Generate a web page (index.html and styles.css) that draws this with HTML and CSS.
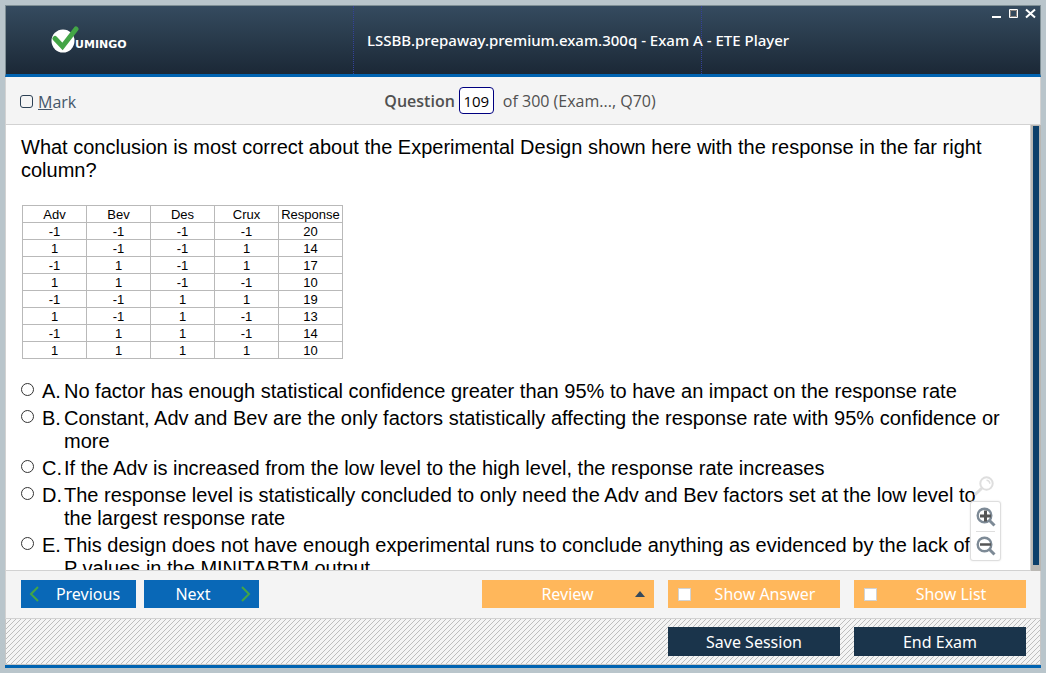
FILE: index.html
```
<!DOCTYPE html>
<html lang="en">
<head>
<meta charset="utf-8">
<title>LSSBB.prepaway.premium.exam.300q - Exam A - ETE Player</title>
<link rel="stylesheet" href="styles.css">
</head>
<body>
<div class="window">
  <header class="titlebar">
    <div class="brand">
      <svg class="brand-mark" width="28" height="28" viewBox="0 0 28 28" aria-hidden="true">
        <circle cx="12" cy="15" r="11.500" fill="#fff"/>
        <path d="M4 12.500 L11.500 20.500 L25 3" fill="none" stroke="#43a546" stroke-width="5" stroke-linecap="round" stroke-linejoin="miter"/>
      </svg>
      <span class="brand-name">UMINGO</span>
    </div>
    <h1 class="title">LSSBB.prepaway.premium.exam.300q - Exam A - ETE Player</h1>
    <div class="window-controls">
      <button class="control" aria-label="Minimize"><svg width="11" height="11" viewBox="0 0 11 11"><path d="M1 9h9" stroke="#fff" stroke-width="2"/></svg></button>
      <button class="control" aria-label="Maximize"><svg width="11" height="11" viewBox="0 0 11 11"><path d="M1.500 1.500h8v8h-8z" fill="#34495c" stroke="#fff"/><path d="M2.500 2.500h6v6h-6z" fill="none" stroke="#8d8580"/></svg></button>
      <button class="control" aria-label="Close"><svg width="11" height="11" viewBox="0 0 11 11"><path d="M1 1.500l9 8M10 1.500l-9 8" stroke="#fff" stroke-width="2"/></svg></button>
    </div>
  </header>

  <div class="question-bar">
    <label class="mark"><input type="checkbox" class="mark-box"><span><u>M</u>ark</span></label>
    <div class="position">
      <label class="position-label" for="question-number">Question</label>
      <input class="position-input" id="question-number" type="text" value="109">
      <span>of 300 (Exam..., Q70)</span>
    </div>
  </div>

  <main class="stage">
    <div class="content">
      <p class="question">What conclusion is most correct about the Experimental Design shown here with the response in the far right column?</p>
      <table class="design">
        <thead><tr><th>Adv</th><th>Bev</th><th>Des</th><th>Crux</th><th>Response</th></tr></thead>
        <tbody>
          <tr><td>-1</td><td>-1</td><td>-1</td><td>-1</td><td>20</td></tr>
          <tr><td>1</td><td>-1</td><td>-1</td><td>1</td><td>14</td></tr>
          <tr><td>-1</td><td>1</td><td>-1</td><td>1</td><td>17</td></tr>
          <tr><td>1</td><td>1</td><td>-1</td><td>-1</td><td>10</td></tr>
          <tr><td>-1</td><td>-1</td><td>1</td><td>1</td><td>19</td></tr>
          <tr><td>1</td><td>-1</td><td>1</td><td>-1</td><td>13</td></tr>
          <tr><td>-1</td><td>1</td><td>1</td><td>-1</td><td>14</td></tr>
          <tr><td>1</td><td>1</td><td>1</td><td>1</td><td>10</td></tr>
        </tbody>
      </table>
      <div class="answers">
        <label class="answer"><input type="radio" name="answer"><span>A.</span><span>No factor has enough statistical confidence greater than 95% to have an impact on the response rate</span></label>
        <label class="answer"><input type="radio" name="answer"><span>B.</span><span>Constant, Adv and Bev are the only factors statistically affecting the response rate with 95% confidence or more</span></label>
        <label class="answer"><input type="radio" name="answer"><span>C.</span><span>If the Adv is increased from the low level to the high level, the response rate increases</span></label>
        <label class="answer"><input type="radio" name="answer"><span>D.</span><span>The response level is statistically concluded to only need the Adv and Bev factors set at the low level to the largest response rate</span></label>
        <label class="answer beside-zoom"><input type="radio" name="answer"><span>E.</span><span>This design does not have enough experimental runs to conclude anything as evidenced by the lack of P values in the MINITABTM output</span></label>
      </div>
    </div>
    <div class="zoom">
      <svg class="zoom-reset" width="20" height="20" viewBox="0 0 20 20" aria-hidden="true">
        <circle cx="12.500" cy="7.500" r="6.200" fill="none" stroke="#dedede" stroke-width="2"/>
        <path d="M12.500 4.200a3.400 3.400 0 0 1 3.300 3.500" fill="none" stroke="#dedede" stroke-width="1.500"/>
        <path d="M7.500 12.500L1.800 18" stroke="#dedede" stroke-width="3" stroke-linecap="round"/>
      </svg>
      <div class="zoom-panel">
        <button class="zoom-button" aria-label="Zoom in"><svg width="20" height="20" viewBox="0 0 20 20"><circle cx="8.500" cy="8.500" r="6.800" fill="none" stroke="#7d8a96" stroke-width="2.400"/><path d="M13.500 13.500L18.500 18.500" stroke="#7d8a96" stroke-width="3"/><path d="M4 9h11M9.500 3.500v11" stroke="#555" stroke-width="3"/></svg></button>
        <button class="zoom-button" aria-label="Zoom out"><svg width="20" height="20" viewBox="0 0 20 20"><circle cx="8.500" cy="8.500" r="6.800" fill="none" stroke="#7d8a96" stroke-width="2.400"/><path d="M13.500 13.500L18.500 18.500" stroke="#7d8a96" stroke-width="3"/><path d="M4 8.500h11" stroke="#555" stroke-width="2.500"/></svg></button>
      </div>
    </div>
    <div class="scroll-track"><div class="scroll-thumb"></div></div>
  </main>

  <div class="action-bar">
    <button class="button nav previous"><svg width="10" height="16" viewBox="0 0 10 16"><path d="M9 1L2 8l7 7" fill="none" stroke="#43a546" stroke-width="2"/></svg><span>Previous</span></button>
    <button class="button nav next"><span>Next</span><svg width="10" height="16" viewBox="0 0 10 16"><path d="M1 1l7 7-7 7" fill="none" stroke="#43a546" stroke-width="2"/></svg></button>
    <button class="button option review"><span>Review</span><svg width="10" height="6" viewBox="0 0 10 6"><path d="M0 6L5 0l5 6z" fill="#34495c"/></svg></button>
    <label class="button option toggle"><input type="checkbox"><span>Show Answer</span></label>
    <label class="button option toggle"><input type="checkbox"><span>Show List</span></label>
  </div>

  <footer class="session-bar">
    <button class="button session">Save Session</button>
    <button class="button session">End Exam</button>
  </footer>
</div>
</body>
</html>
```
FILE: styles.css
```
* { box-sizing: border-box; }

body {
  margin: 0;
  height: 100vh;
  padding: 5px;
  background: #b9c5cb;
  font-family: "Open Sans", "Noto Sans", sans-serif;
  font-size: 16px;
}

button, input { font: inherit; margin: 0; }
button { border: 0; padding: 0; background: none; }
svg { display: block; }

.window {
  display: flex;
  flex-direction: column;
  height: 100%;
  border-bottom: 3px solid #0063b1;
  background: #f4f4f4;
}

/* Title bar */
.titlebar {
  display: grid;
  grid-template-columns: 347px 349px 1fr;
  height: 72px;
  border: 1px solid #7f8f95;
  border-bottom: 3px solid #0063b1;
  background: linear-gradient(#354b5f, #1b2836);
  color: #fff;
}

.brand { display: flex; align-items: center; padding-left: 45px; }
.brand-name {
  margin-left: -4px;
  padding-top: 9px;
  font: bold 11px/14px "DejaVu Sans", sans-serif;
}

.title {
  display: flex;
  align-items: center;
  margin: 0;
  padding-left: 13px;
  border: dotted #34419a;
  border-width: 0 1px;
  font-size: 15px;
  font-weight: 500;
  font-family: "Noto Sans", sans-serif;
  white-space: nowrap;
}

.window-controls {
  display: flex;
  justify-content: flex-end;
  gap: 6px;
  height: 11px;
  margin-top: 2px;
  padding-right: 4px;
}

/* Question position */
.question-bar {
  display: grid;
  grid-template-columns: 1fr auto 1fr;
  align-items: center;
  height: 48px;
  padding: 0 20px 0 14px;
  border: solid #d2d2d2;
  border-width: 0 1px 1px;
  color: #505050;
}

.mark { display: flex; align-items: center; gap: 5px; padding-top: 2px; color: #44566a; }
.mark-box {
  appearance: none;
  width: 13px;
  height: 13px;
  border: 1px solid #2c4054;
  border-radius: 3px;
}

.position { display: flex; align-items: center; }
.position-label { font-weight: 600; }
.position-input {
  width: 35px;
  height: 27px;
  margin: 0 9px 0 4px;
  padding: 0;
  border: 1px solid #000080;
  border-radius: 4px;
  background: #fff;
  color: #000;
  text-align: center;
  font-size: 15px;
}

/* Question and answers */
.stage {
  position: relative;
  display: flex;
  flex: 1;
  min-height: 0;
  border-left: 1px solid #d2d2d2;
  background: #fff;
}

.content {
  flex: 1;
  padding: 11px 30px 0 15px;
  border-bottom: 1px solid #d2d2d2;
  overflow: hidden;
  font: 20px/23px "Liberation Sans", Arial, sans-serif;
  color: #000;
}

.question { margin: 0 0 23px; }

.design {
  margin-left: 1px;
  border-collapse: collapse;
  table-layout: fixed;
  width: 321px;
  font-size: 13px;
  line-height: 15px;
  text-align: center;
}
.design th, .design td {
  height: 17px;
  padding: 1px 0 0;
  border: 1px solid #b9b9b9;
  font-weight: normal;
}

.answers { display: grid; gap: 4px; margin-top: 21px; }
.answer {
  display: grid;
  grid-template-columns: 21px 22px 1fr;
  align-items: start;
}
.beside-zoom { padding-right: 26px; }
.answer input {
  appearance: none;
  width: 13px;
  height: 13px;
  margin-top: 3px;
  border: 1px solid #333;
  border-radius: 50%;
}

.scroll-track {
  width: 11px;
  padding: 1px 2px 6px;
  background: #bab8b4;
  border-left: 1px solid #d2d2d2;
}
.scroll-thumb { height: 100%; background: #0d406b; }

.zoom {
  position: absolute;
  right: 40px;
  bottom: 10px;
}
.zoom-reset { margin: 0 auto 5px 4px; }
.zoom-panel {
  width: 31px;
  padding: 0 5px;
  border: 1px solid #dedede;
  border-radius: 3px;
  background: #fff;
  box-shadow: 0 0 2px #e4e4e4;
}
.zoom-button { display: block; width: 19px; height: 29px; }
.zoom-button + .zoom-button { border-top: 1px solid #dedede; }

/* Actions */
.action-bar {
  display: flex;
  align-items: flex-start;
  height: 48px;
  padding: 9px 14px 0 15px;
  border: solid #d2d2d2;
  border-width: 0 1px 1px;
}

.button {
  display: flex;
  align-items: center;
  height: 28px;
  color: #fff;
  font-family: "Noto Sans", sans-serif;
}
.button span { flex: 1; text-align: center; }

.nav { width: 115px; padding: 0 8px; background: #0968b7; }
.next { margin-left: 8px; }
.previous span { padding-left: 9px; }
.next span { padding-right: 7px; }

.option { width: 172px; margin-left: 14px; padding: 0 10px; background: #ffb75b; }
.review { margin-left: auto; padding-right: 9px; }
.review span { padding-left: 8px; }
.toggle input {
  appearance: none;
  width: 13px;
  height: 13px;
  border: 1px solid #d2d2d2;
  background: #fff;
}
.toggle span { padding-left: 9px; }

.session-bar {
  display: flex;
  justify-content: flex-end;
  gap: 14px;
  height: 46px;
  padding: 8px 14px;
  border: solid #c6c6c6;
  border-width: 0 1px 1px;
  background: linear-gradient(135deg, #f4f4f4 42%, #bdbdbd 42% 58%, #f4f4f4 58%) 0 0 / 5px 5px;
}
.session {
  justify-content: center;
  width: 172px;
  height: 29px;
  background: #1a344b;
}
```
